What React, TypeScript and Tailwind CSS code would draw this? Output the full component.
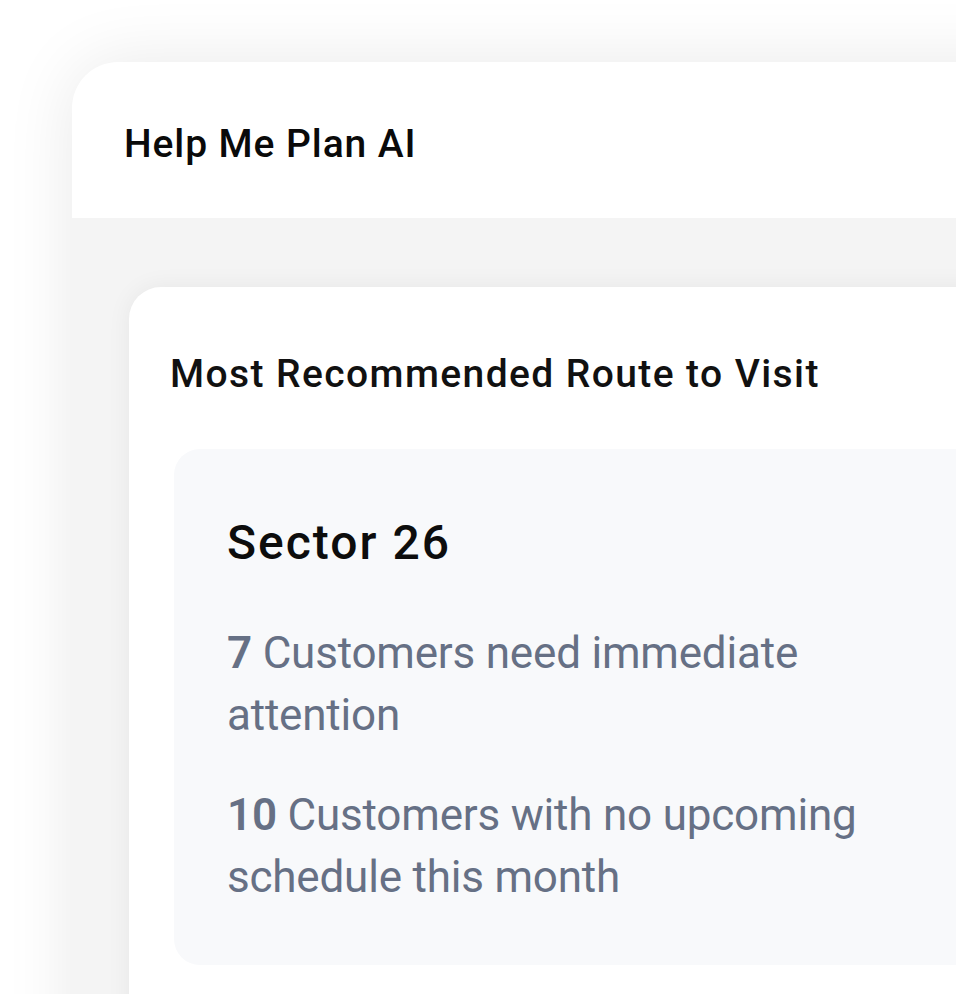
import React from "react";

export default function App() {
  return (
    <div
      className="h-[994px] w-[956px] overflow-hidden bg-white pl-[72px] pt-[62px]"
      style={{ fontFamily: "Roboto, 'Noto Sans', sans-serif" }}
    >
      <div className="w-[1000px] h-[1100px] rounded-tl-[46px] bg-white shadow-[0_0_70px_rgba(0,0,0,0.09)] overflow-hidden">
        <div className="h-[156px] pl-[52px] pt-[63px]">
          <h1 className="text-[39px] leading-none font-medium tracking-[0.9px] text-[#0a0a0a]">Help Me Plan AI</h1>
        </div>
        <div className="bg-[#f4f4f4] pl-[57px] pt-[69px] h-full">
          <div className="rounded-tl-[32px] bg-white shadow-[0_0_24px_rgba(0,0,0,0.06)] pl-[41px] pt-[68px] h-full">
            <h2 className="text-[39px] leading-none font-medium tracking-[1.4px] text-[#111111]">
              Most Recommended Route to Visit
            </h2>
            <div className="mt-[55px] ml-[4px] rounded-l-[26px] bg-[#f8f9fb] pl-[53px] pt-[70px] pb-[57px]">
              <h3 className="text-[48px] leading-none font-medium tracking-[2px] text-[#0d0d0d]">Sector 26</h3>
              <div className="mt-[55px] flex flex-col gap-[38px] max-w-[680px] text-[44px] leading-[62px] tracking-[-0.2px] text-[#667085]">
                <p>
                  <span className="font-semibold">7</span> Customers need immediate attention
                </p>
                <p>
                  <span className="font-semibold">10</span> Customers with no upcoming schedule this month
                </p>
              </div>
            </div>
          </div>
        </div>
      </div>
    </div>
  );
}
